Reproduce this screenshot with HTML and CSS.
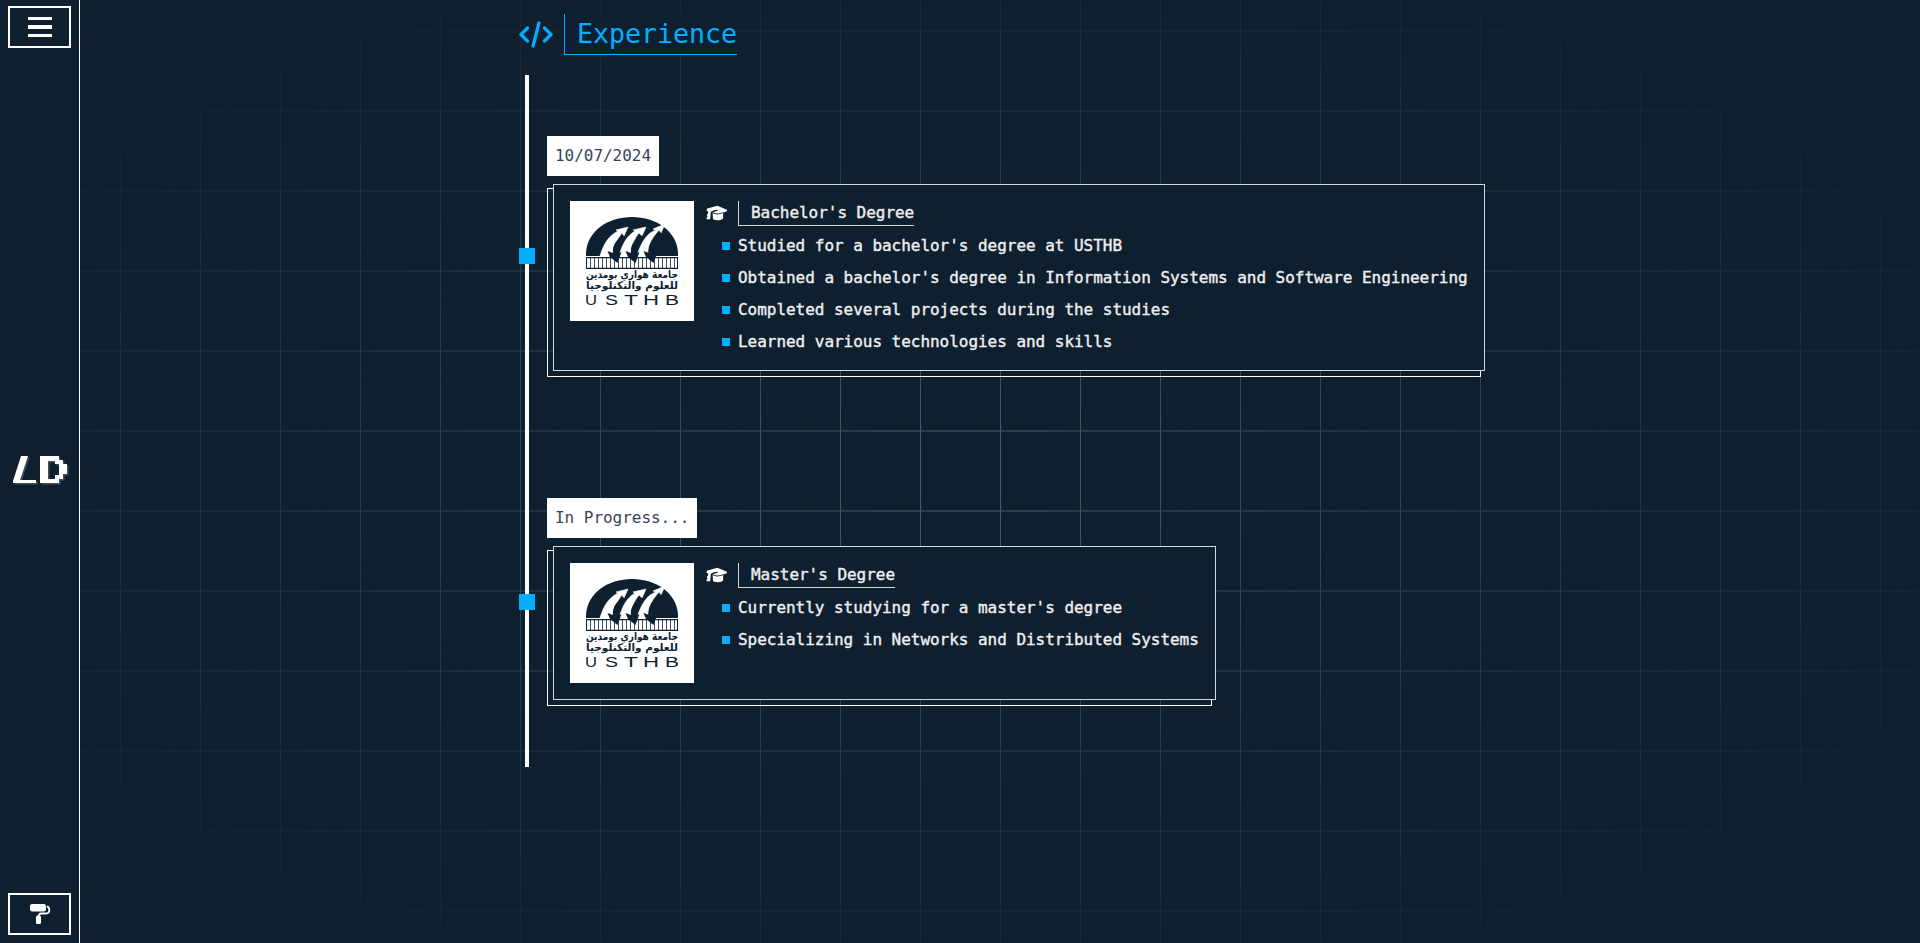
FILE: index.html
```html
<!DOCTYPE html>
<html lang="en">
<head>
<meta charset="utf-8">
<title>Experience</title>
<link rel="stylesheet" href="styles.css">
</head>
<body>
<svg class="defs" aria-hidden="true">
  <defs>
  <symbol id="cap" viewBox="0 0 24 24"><path fill="currentColor" d="M13 3 L24 7.6 L23.8 9.4 L19.6 10.9 V17.6 Q15 21.5 8 18.6 L7.6 10.8 Q10 9.4 13.4 8.8 L13.2 7.6 Q9 7.8 5.5 10 L4.8 18.6 H.6 Q.4 16.6 1.7 15.6 L1 13.4 L2.6 11.3 L2.2 9.6 L.4 8.6 L1.4 6.4 Z"/><path fill="none" stroke="#0e1f30" stroke-width="1.2" d="M8 11 Q12 14 19.6 11"/></symbol>
  <g id="usthb">
    <path fill="#0e1f30" d="M0 39 V36 C1 14 22 0 46 0 S91 14 92 36 V39 Z"/>
    <g fill="#fff" stroke="#fff" stroke-width=".6">
      <path d="M14 39 C18 25 24 18 32 14 L30 13 L42 10 L38 19 L36 16 C30 23 28 31 29 39 Z"/>
      <path d="M33 39 C37 25 42 18 49 14 L47 13 L60 10 L56 19 L53 16 C47 23 45 31 46 39 Z"/>
      <path d="M51 39 C55 25 61 16 70 13 L67 12 L79 7 L75 16 L73 13 C64 23 61 31 62 39 Z"/>
    </g>
    <path fill="#0e1f30" d="M0 40h92v12H0z"/><path fill="#fff" d="M1 41.3h90v9.5H1z"/>
    <path stroke="#0e1f30" stroke-width=".8" d="M4.500 41v10m4-10v10m4-10v10m4-10v10m4-10v10m4-10v10m4-10v10m4-10v10m4-10v10m4-10v10m4-10v10m4-10v10m4-10v10m4-10v10m4-10v10m4-10v10m4-10v10m4-10v10m4-10v10m4-10v10m4-10v10m4-10v10"/>
    <g fill="#0e1f30"><path d="M27 36 L21.500 34 L24 40 L31.500 46 L35.500 35 L31.500 37 C30 30 34 22 38 18 C31 22 26 28 27 36Z"/><path d="M45 36 L39.500 34 L42 40 L49.500 46 L53.500 35 L49.500 37 C48 30 52 22 56 18 C49 22 44 28 45 36Z"/><path d="M63 36 L57.500 34 L60 40 L67.500 46 L71.500 35 L67.500 37 C66 30 70 20 76 14 C67 20 62 28 63 36Z"/></g>
  </g>
  </defs>
</svg>
<div class="grid-bg"></div>
<div class="app">
  <aside class="sidebar">
    <button class="side-btn" aria-label="Menu"><svg width="24" height="22" viewBox="0 0 24 22"><path fill="#fff" d="M0 1h24v3H0zM0 9h24v4H0zM0 18h24v3H0z"/></svg></button>
    <svg class="logo" width="60" height="34" viewBox="0 0 60 34">
      <defs><path id="ld" fill-rule="evenodd" d="M10 2h7L9 26h16v3H2v-2zM29 2h19v4h4v4h4v10h-4v5h-4v4H29zM37 7v18h7v-4h4V10h-4V7z"/></defs>
      <use class="logo-shade" href="#ld" x="1.500" y="1.500"/><use class="logo-face" href="#ld"/>
    </svg>
    <button class="side-btn" aria-label="Theme"><svg width="22" height="22" viewBox="0 0 22 22"><rect x="1" y="1" width="16" height="7.500" rx="2.200" fill="#fff"/><path fill="none" stroke="#fff" stroke-width="1.800" d="M18 3.500 Q20.300 4 20.300 7 Q20.300 10.500 17 10.500 H12 Q9.800 10.500 9.800 14"/><rect x="7" y="12.500" width="5" height="8.500" rx="1.500" fill="#fff"/></svg></button>
  </aside>
  <main class="content">
    <h1 class="heading">
      <svg width="34" height="28" viewBox="0 0 34 28" fill="none" stroke="currentColor" stroke-width="3.200" stroke-linecap="round" stroke-linejoin="round"><path d="M8.500 7 L2 13.500 L8.500 20M25.500 7 L32 13.500 L25.500 20M20 2 L14 25"/></svg>
      <span class="heading-text">Experience</span>
    </h1>
    <ul class="timeline">
      <li class="entry">
        <time class="date">10/07/2024</time>
        <article class="card">
          <svg class="emblem" viewBox="-16 -16 124 120"><use href="#usthb"/>
            <g class="emblem-ar"><text x="46" y="60.500" text-anchor="middle" textLength="92" lengthAdjust="spacingAndGlyphs">جامعة هواري بومدين</text><text x="46" y="71.500" text-anchor="middle" textLength="92" lengthAdjust="spacingAndGlyphs">للعلوم والتكنلوجيا</text></g>
            <g class="emblem-la"><text x="-1" y="88" textLength="12" lengthAdjust="spacingAndGlyphs">U</text><text x="19" y="88" textLength="13" lengthAdjust="spacingAndGlyphs">S</text><text x="38" y="88" textLength="14" lengthAdjust="spacingAndGlyphs">T</text><text x="57" y="88" textLength="16" lengthAdjust="spacingAndGlyphs">H</text><text x="79" y="88" textLength="14" lengthAdjust="spacingAndGlyphs">B</text></g>
          </svg>
          <div class="details">
            <h2 class="title"><svg class="cap"><use href="#cap"/></svg><span class="title-text">Bachelor's Degree</span></h2>
            <ul class="points"><li>Studied for a bachelor's degree at USTHB</li><li>Obtained a bachelor's degree in Information Systems and Software Engineering</li><li>Completed several projects during the studies</li><li>Learned various technologies and skills</li></ul>
          </div>
        </article>
      </li>
      <li class="entry">
        <time class="date">In Progress...</time>
        <article class="card card-short">
          <svg class="emblem" viewBox="-16 -16 124 120"><use href="#usthb"/>
            <g class="emblem-ar"><text x="46" y="60.500" text-anchor="middle" textLength="92" lengthAdjust="spacingAndGlyphs">جامعة هواري بومدين</text><text x="46" y="71.500" text-anchor="middle" textLength="92" lengthAdjust="spacingAndGlyphs">للعلوم والتكنلوجيا</text></g>
            <g class="emblem-la"><text x="-1" y="88" textLength="12" lengthAdjust="spacingAndGlyphs">U</text><text x="19" y="88" textLength="13" lengthAdjust="spacingAndGlyphs">S</text><text x="38" y="88" textLength="14" lengthAdjust="spacingAndGlyphs">T</text><text x="57" y="88" textLength="16" lengthAdjust="spacingAndGlyphs">H</text><text x="79" y="88" textLength="14" lengthAdjust="spacingAndGlyphs">B</text></g>
          </svg>
          <div class="details">
            <h2 class="title"><svg class="cap"><use href="#cap"/></svg><span class="title-text">Master's Degree</span></h2>
            <ul class="points"><li>Currently studying for a master's degree</li><li>Specializing in Networks and Distributed Systems</li></ul>
          </div>
        </article>
      </li>
    </ul>
  </main>
</div>
</body>
</html>
```
FILE: styles.css
```css
* { box-sizing: border-box; margin: 0; padding: 0; }
body { height: 943px; overflow: hidden; background: #0e1f30; color: #fff; font-family: "DejaVu Sans Mono", monospace; font-size: 16px; letter-spacing: -0.0325px; }
ul { list-style: none; }
.defs { position: absolute; width: 0; height: 0; }
.grid-bg {
  position: absolute; inset: 0;
  background: linear-gradient(to right, #475b78 1px, transparent 1px) 40px 0 / 80px 80px, linear-gradient(to bottom, #2b3f56 2px, transparent 2px) 0 30px / 80px 80px;
  -webkit-mask-image: radial-gradient(ellipse 60% 60% at 50% 50%, #000, transparent);
  mask-image: radial-gradient(ellipse 60% 60% at 50% 50%, #000, transparent);
}
.app { position: relative; display: flex; height: 943px; }
.sidebar { width: 80px; height: 943px; padding: 6px 8px 8px; display: flex; flex-direction: column; justify-content: space-between; border-right: 1px solid #fff; background: #0e1f30; }
.side-btn { width: 63px; height: 42px; display: flex; align-items: center; justify-content: center; border: 2px solid #fff; background: transparent; }
.logo { margin-left: 3px; }
.logo-shade { fill: #42505f; }
.logo-face { fill: #fff; }
.content { padding: 14px 0 0 435px; }
.heading { display: flex; align-items: center; gap: 11px; height: 41px; color: #00b0ff; font-weight: 400; }
.heading svg { margin-left: 4px; }
.heading-text { height: 41px; padding: 0 0 0 12px; border-left: 1px solid; border-bottom: 1px solid; background: #0e1f30; font-size: 26.667px; line-height: 40px; letter-spacing: -0.06px; }
.timeline { position: relative; width: max-content; height: 692px; margin: 20px 0 0 10px; padding: 61px 0 0 18px; border-left: 4px solid #fff; display: flex; flex-direction: column; gap: 127px; }
.entry { position: relative; z-index: 0; width: max-content; }
.entry::before { content: ""; position: absolute; left: -28px; top: 112px; width: 16px; height: 16px; background: #00b0ff; }
.entry + .entry::before { top: 96px; }
.date { display: block; width: max-content; height: 40px; padding: 0 8px; background: #fff; color: #34455a; line-height: 39px; }
.card { position: relative; margin: 8px 0 0 6px; padding: 16px; display: flex; gap: 12px; border: 1px solid #d5d7db; background: #0e1f30; height: 187px; -webkit-text-stroke: 0.4px #eee; color: #eee; }
.card-short { height: 154px; }
.card::before { content: ""; position: absolute; z-index: -1; left: -7px; top: 3px; right: 3px; bottom: -7px; border: 1px solid #fff; }
.emblem { flex: none; width: 124px; height: 120px; background: #fff; }
.emblem-ar { font: bold 10.5px "DejaVu Sans", sans-serif; letter-spacing: 0; fill: #0e1f30; -webkit-text-stroke: 0.5px #0e1f30; }
.emblem-la { font: 14.5px "Liberation Sans", sans-serif; letter-spacing: 0; fill: #0e1f30; -webkit-text-stroke: 0; }
.title { display: flex; align-items: flex-start; gap: 11px; font-size: 16px; font-weight: 400; }
.cap { width: 21px; height: 21px; margin-top: 2px; color: #fff; }
.title-text { height: 25px; padding-left: 12px; border-left: 1px solid #d5d7db; border-bottom: 1px solid #d5d7db; line-height: 23px; }
.points { padding: 5px 0 0 16px; }
.points li { height: 32px; display: flex; align-items: center; gap: 8px; line-height: 30px; white-space: nowrap; padding-bottom: 2px; }
.points li::before { content: ""; width: 8px; height: 8px; background: #00b0ff; }
```
